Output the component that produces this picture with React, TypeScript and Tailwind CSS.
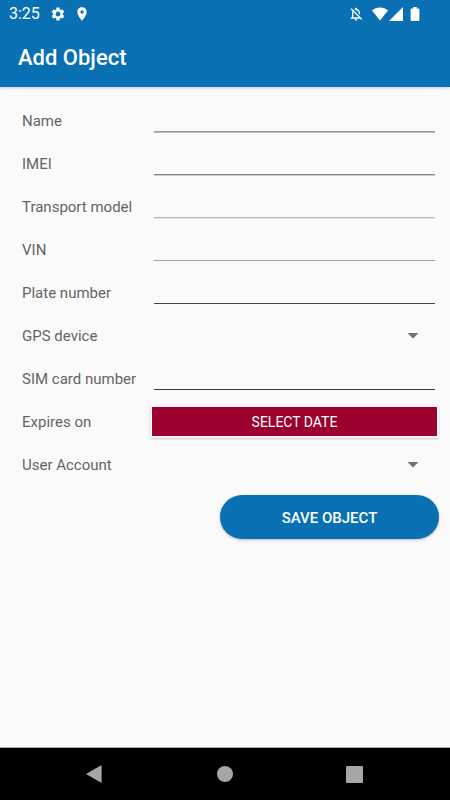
import { useState, type ReactNode } from 'react'
import { MdLocationOn, MdOutlineNotificationsOff, MdSettings } from 'react-icons/md'

interface FieldRowProps {
  id: string
  label: string
  children: ReactNode
}

function FieldRow({ id, label, children }: FieldRowProps) {
  return (
    <div className="flex h-[43px] items-center">
      <label htmlFor={id} className="w-[132px] shrink-0 pt-px text-[15px] leading-6 whitespace-nowrap text-[#646464]">
        {label}
      </label>
      {children}
    </div>
  )
}

interface TextFieldProps {
  id: string
  label: string
  lineClassName: string
}

function TextField({ id, label, lineClassName }: TextFieldProps) {
  return (
    <FieldRow id={id} label={label}>
      <div className="flex h-full min-w-0 flex-1 flex-col pt-1">
        <input
          id={id}
          type="text"
          className="h-7 w-full bg-transparent text-[15px] text-[#333333] outline-none"
        />
        <div className={lineClassName} aria-hidden="true" />
      </div>
    </FieldRow>
  )
}

function SelectField({ id, label }: { id: string; label: string }) {
  return (
    <FieldRow id={id} label={label}>
      <div className="grid h-[31px] min-w-0 flex-1 items-center">
        <select
          id={id}
          className="col-start-1 row-start-1 h-full w-full appearance-none bg-transparent pr-8 text-[15px] text-[#333333] outline-none"
        />
        <svg
          viewBox="0 0 12 6"
          className="pointer-events-none col-start-1 row-start-1 mr-4 h-[6px] w-3 justify-self-end fill-[#717171]"
          aria-hidden="true"
        >
          <path d="M0.5 0h11L6 5.6z" />
        </svg>
      </div>
    </FieldRow>
  )
}

function StatusBar() {
  return (
    <div className="flex h-7 items-center justify-between pr-[30px] pl-[9px] text-white">
      <div className="flex items-center">
        <span className="w-[41px] text-base">3:25</span>
        <MdSettings className="size-4" aria-hidden="true" />
        <MdLocationOn className="ml-2 size-4" aria-hidden="true" />
      </div>
      <div className="flex items-center" aria-hidden="true">
        <MdOutlineNotificationsOff className="mr-2 size-4" />
        <svg viewBox="0 0 16 14" className="h-[14px] w-4 fill-current">
          <path d="M8 13.6 0 3.6C2.2 1.6 5 0.4 8 0.4s5.8 1.2 8 3.2z" />
        </svg>
        <svg viewBox="0 0 14 14" className="ml-px h-[14px] w-[14px] fill-current">
          <path d="M14 0v14H0z" />
        </svg>
        <svg viewBox="0 0 10 14" className="ml-[7px] h-[14px] w-[10px] fill-current">
          <path d="M3.2 0h3.6v1.4h1.7q0.9 0 0.9 0.9v10.8q0 0.9-0.9 0.9H1.5q-0.9 0-0.9-0.9V2.3q0-0.9 0.9-0.9h1.7z" />
        </svg>
      </div>
    </div>
  )
}

function NavigationBar() {
  const buttonClassName = 'grid h-full w-12 place-items-center'

  return (
    <nav className="flex h-[53px] items-center justify-center gap-[81px] border-t border-[#a8a8a8] bg-black">
      <button type="button" aria-label="Back" className={buttonClassName}>
        <svg viewBox="0 0 20 18" className="h-[18px] w-5 fill-[#a6a6a6]" aria-hidden="true">
          <path d="M0 9 14.8 0.4q0.8-0.3 0.8 0.5v16.2q0 0.8-0.8 0.5z" />
        </svg>
      </button>
      <button type="button" aria-label="Home" className={buttonClassName}>
        <span className="size-4 rounded-full bg-[#a6a6a6]" />
      </button>
      <button type="button" aria-label="Recent apps" className={buttonClassName}>
        <span className="size-[17px] rounded-[1px] bg-[#a6a6a6]" />
      </button>
    </nav>
  )
}

export default function App() {
  const [date, setDate] = useState('')

  return (
    <div className="flex min-h-screen flex-col bg-[#fafafa] [font-family:Roboto,sans-serif]">
      <header className="bg-[#0971b3] shadow-[0_1px_3px_rgba(0,0,0,0.2)]">
        <StatusBar />
        <div className="flex h-[59px] items-center px-[18px]">
          <h1 className="text-[22px] font-medium text-white">Add Object</h1>
        </div>
      </header>

      <form className="flex-1 pt-3" onSubmit={(event) => event.preventDefault()}>
        <div className="pr-[15px] pl-[22px]">
          <TextField id="name" label="Name" lineClassName="h-[2px] border-t border-[#9c9c9c] bg-[#bcbcbc]" />
          <TextField id="imei" label="IMEI" lineClassName="h-[2px] border-t border-[#858585] bg-[#cccccc]" />
          <TextField id="model" label="Transport model" lineClassName="h-[2px] border-t border-[#b8b8b8] bg-[#e4e4e4]" />
          <TextField id="vin" label="VIN" lineClassName="h-px bg-[#a0a0a0]" />
          <TextField id="plate" label="Plate number" lineClassName="h-px bg-[#444444]" />
          <SelectField id="device" label="GPS device" />
          <TextField id="sim" label="SIM card number" lineClassName="h-px bg-[#3c3c3c]" />
          <FieldRow id="expires" label="Expires on">
            <button
              id="expires"
              type="button"
              className="-mx-1 h-[33px] min-w-0 flex-1 border-2 border-[#f6f6f6] bg-[#9b002f] text-sm text-white shadow-[0_1px_2px_rgba(0,0,0,0.2)]"
              onClick={() => setDate(new Date().toLocaleDateString())}
            >
              {date || 'SELECT DATE'}
            </button>
          </FieldRow>
          <SelectField id="account" label="User Account" />
        </div>
        <div className="flex justify-end pt-[9px] pr-[11px] pb-4">
          <button
            type="submit"
            className="h-11 w-1/2 max-w-[219px] rounded-full bg-[#0971b3] pt-0.5 text-[15px] font-medium text-white shadow-[0_1px_3px_rgba(0,0,0,0.25)]"
          >
            SAVE OBJECT
          </button>
        </div>
      </form>

      <NavigationBar />
    </div>
  )
}
